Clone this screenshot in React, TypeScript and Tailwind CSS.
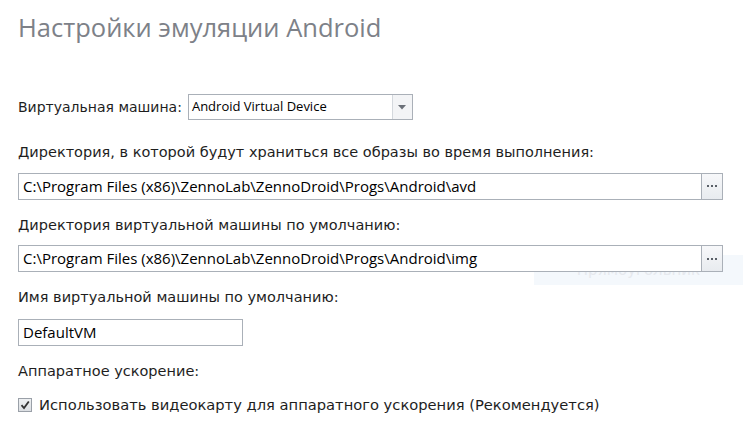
const label = "text-[14.5px] leading-none text-[#1e1e1e]";
const field =
  "flex h-[27px] items-center border border-[#aab0b8] bg-white pl-[4px] text-[15px] text-black";

function PathField({ value }: { value: string }) {
  return (
    <div className="flex h-[27px] w-[705px]">
      <div className={`${field} grow border-r-0`}>{value}</div>
      <button className="flex w-[22px] items-center justify-center gap-[2px] border border-[#aab0b8] bg-gradient-to-b from-[#f7f8fa] to-[#e8ebef]">
        <span className="h-[2px] w-[2px] bg-[#5a6068]" />
        <span className="h-[2px] w-[2px] bg-[#5a6068]" />
        <span className="h-[2px] w-[2px] bg-[#5a6068]" />
      </button>
    </div>
  );
}

export default function App() {
  return (
    <main
      className="relative h-[432px] w-[743px] overflow-hidden bg-white pl-[18px]"
      style={{ fontFamily: '"DejaVu Sans", sans-serif' }}
    >
      <h1
        className="pt-[11px] text-[25.5px] leading-[32px] text-[#7d8188]"
        style={{ fontFamily: '"Open Sans", sans-serif' }}
      >
        Настройки эмуляции Android
      </h1>

      <div className="mt-[51px] flex items-center gap-[6px]">
        <span className="text-[14px] leading-none text-[#1e1e1e]">Виртуальная машина:</span>
        <div className="flex h-[26px] w-[225px] border border-[#aab0b8] bg-white">
          <span
            className="flex grow items-center pl-[3px] text-[13px] text-black"
            style={{ fontFamily: '"Open Sans", sans-serif' }}
          >
            Android Virtual Device
          </span>
          <span className="flex w-[20px] items-center justify-center border-l border-[#d4d8dd] bg-[#f3f4f6]">
            <svg width="8" height="5" viewBox="0 0 8 5">
              <path d="M0 0 H8 L4 4.5 Z" fill="#6b7078" />
            </svg>
          </span>
        </div>
      </div>

      <div className="mt-[25px] flex flex-col">
        <span className={label}>Директория, в которой будут храниться все образы во время выполнения:</span>
        <div className="mt-[13px]" style={{ fontFamily: '"Open Sans", sans-serif' }}>
          <PathField value="C:\Program Files (x86)\ZennoLab\ZennoDroid\Progs\Android\avd" />
        </div>

        <span className={`${label} mt-[18px]`}>Директория виртуальной машины по умолчанию:</span>
        <div className="relative z-10 mt-[13px]" style={{ fontFamily: '"Open Sans", sans-serif' }}>
          <PathField value="C:\Program Files (x86)\ZennoLab\ZennoDroid\Progs\Android\img" />
        </div>

        <span className={`${label} mt-[18px]`}>Имя виртуальной машины по умолчанию:</span>
        <div
          className={`${field} mt-[14px] w-[225px]`}
          style={{ fontFamily: '"Open Sans", sans-serif' }}
        >
          DefaultVM
        </div>

        <span className={`${label} mt-[18px]`}>Аппаратное ускорение:</span>
        <label className="mt-[20px] flex items-center gap-[7px]">
          <span className="flex h-[14px] w-[14px] items-center justify-center border border-[#9aa0a8] bg-gradient-to-b from-[#eef0f2] to-[#dcdfe3]">
            <svg width="10" height="10" viewBox="0 0 10 10">
              <path d="M1.5 5.2 L4 8 L8.8 1.5" fill="none" stroke="#333" strokeWidth="1.8" />
            </svg>
          </span>
          <span className="text-[14.7px] leading-none text-[#1e1e1e]">
            Использовать видеокарту для аппаратного ускорения (Рекомендуется)
          </span>
        </label>
      </div>

      <div className="absolute left-[534px] top-[255px] flex h-[30px] w-[209px] items-center justify-center bg-[#f4f8fc] text-[15px] text-[#e6e9ee]">
        Прямоугольник
      </div>
    </main>
  );
}
